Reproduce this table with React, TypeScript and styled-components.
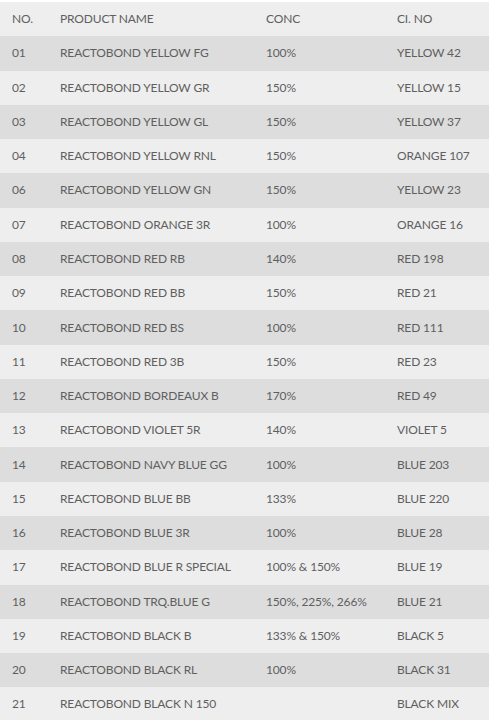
import React from "react";
import styled, { createGlobalStyle } from "styled-components";

const Global = createGlobalStyle`
  html, body { margin: 0; padding: 0; background: #ffffff; }
  body { font-family: Lato, "Liberation Sans", sans-serif; }
`;

const Table = styled.div`
  margin-top: 2px;
  width: 489px;
  display: flex;
  flex-direction: column;
`;

const Row = styled.div<{ $shade: "light" | "dark" }>`
  display: grid;
  grid-template-columns: 48px 206px 131px 1fr;
  background: ${(p) => (p.$shade === "dark" ? "#dddddd" : "#eeeeee")};
  height: 34.28px;
  align-items: center;
`;

const Cell = styled.div`
  padding-left: 12px;
  font-size: 12px;
  line-height: 16px;
  color: #5f5f5f;
  white-space: nowrap;
  letter-spacing: -0.15px;
`;

const rows: [string, string, string, string][] = [
  ["01", "REACTOBOND YELLOW FG", "100%", "YELLOW 42"],
  ["02", "REACTOBOND YELLOW GR", "150%", "YELLOW 15"],
  ["03", "REACTOBOND YELLOW GL", "150%", "YELLOW 37"],
  ["04", "REACTOBOND YELLOW RNL", "150%", "ORANGE 107"],
  ["06", "REACTOBOND YELLOW GN", "150%", "YELLOW 23"],
  ["07", "REACTOBOND ORANGE 3R", "100%", "ORANGE 16"],
  ["08", "REACTOBOND RED RB", "140%", "RED 198"],
  ["09", "REACTOBOND RED BB", "150%", "RED 21"],
  ["10", "REACTOBOND RED BS", "100%", "RED 111"],
  ["11", "REACTOBOND RED 3B", "150%", "RED 23"],
  ["12", "REACTOBOND BORDEAUX B", "170%", "RED 49"],
  ["13", "REACTOBOND VIOLET 5R", "140%", "VIOLET 5"],
  ["14", "REACTOBOND NAVY BLUE GG", "100%", "BLUE 203"],
  ["15", "REACTOBOND BLUE BB", "133%", "BLUE 220"],
  ["16", "REACTOBOND BLUE 3R", "100%", "BLUE 28"],
  ["17", "REACTOBOND BLUE R SPECIAL", "100% & 150%", "BLUE 19"],
  ["18", "REACTOBOND TRQ.BLUE G", "150%, 225%, 266%", "BLUE 21"],
  ["19", "REACTOBOND BLACK B", "133% & 150%", "BLACK 5"],
  ["20", "REACTOBOND BLACK RL", "100%", "BLACK 31"],
  ["21", "REACTOBOND BLACK N 150", "", "BLACK MIX"],
];

export default function App() {
  return (
    <>
      <Global />
      <Table>
        <Row $shade="light">
          <Cell>NO.</Cell>
          <Cell>PRODUCT NAME</Cell>
          <Cell>CONC</Cell>
          <Cell>CI. NO</Cell>
        </Row>
        {rows.map((r, i) => (
          <Row key={r[0]} $shade={i % 2 === 0 ? "dark" : "light"}>
            {r.map((c, j) => (
              <Cell key={j}>{c}</Cell>
            ))}
          </Row>
        ))}
      </Table>
    </>
  );
}
